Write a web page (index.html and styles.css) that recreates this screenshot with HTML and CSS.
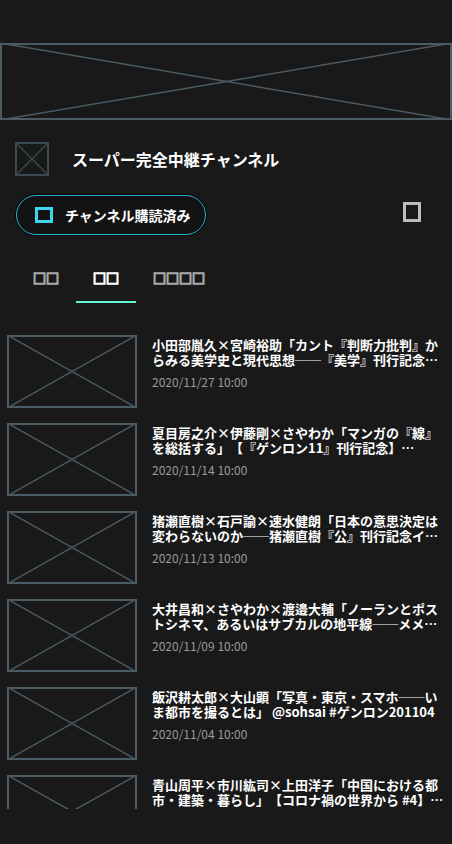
FILE: index.html
```html
<!DOCTYPE html>
<html lang="ja">
<head>
  <meta charset="UTF-8">
  <title>スーパー完全中継チャンネル</title>
  <link rel="stylesheet" href="styles.css">
</head>
<body>
  <div class="page">
    <div class="top-space"></div>

    <div class="banner">
      <svg width="452" height="77" viewBox="0 0 452 77" preserveAspectRatio="none">
        <rect x="1" y="1" width="450" height="75" fill="none" stroke="#4b5b64" stroke-width="2"/>
        <line x1="0" y1="0" x2="452" y2="77" stroke="#4b5b64" stroke-width="1.5"/>
        <line x1="452" y1="0" x2="0" y2="77" stroke="#4b5b64" stroke-width="1.5"/>
      </svg>
    </div>

    <div class="channel">
      <svg class="avatar" width="34" height="34" viewBox="0 0 34 34">
        <rect x="1" y="1" width="32" height="32" fill="none" stroke="#3a4850" stroke-width="2"/>
        <line x1="1" y1="1" x2="33" y2="33" stroke="#3a4850" stroke-width="1.4"/>
        <line x1="33" y1="1" x2="1" y2="33" stroke="#3a4850" stroke-width="1.4"/>
      </svg>
      <h1 class="channel-name">スーパー完全中継チャンネル</h1>
    </div>

    <div class="actions">
      <button class="subscribed">
        <svg width="18" height="16" viewBox="0 0 18 16">
          <rect x="1.5" y="1.5" width="15" height="13" fill="none" stroke="#3fd6f0" stroke-width="3"/>
        </svg>
        <span>チャンネル購読済み</span>
      </button>
      <button class="more">
        <svg width="18" height="20" viewBox="0 0 18 20">
          <rect x="1.5" y="1.5" width="15" height="17" fill="none" stroke="#bdbdbd" stroke-width="3"/>
        </svg>
      </button>
    </div>

    <div class="tabs">
      <div class="tab">□□</div>
      <div class="tab active">□□</div>
      <div class="tab">□□□□</div>
    </div>

    <ul class="video-list" id="video-list"></ul>
    <div class="footer"></div>
  </div>

  <script>
    const videos = [
      { title: '小田部胤久×宮崎裕助「カント『判断力批判』からみる美学史と現代思想──『美学』刊行記念イベント」', date: '2020/11/27 10:00' },
      { title: '夏目房之介×伊藤剛×さやわか「マンガの『線』を総括する」【『ゲンロン11』刊行記念】 @fusanosuke_n #ゲンロン201114', date: '2020/11/14 10:00' },
      { title: '猪瀬直樹×石戸諭×速水健朗「日本の意思決定は変わらないのか──猪瀬直樹『公』刊行記念イベント」', date: '2020/11/13 10:00' },
      { title: '大井昌和×さやわか×渡邉大輔「ノーランとポストシネマ、あるいはサブカルの地平線──メメント、テネット」', date: '2020/11/09 10:00' },
      { title: '飯沢耕太郎×大山顕「写真・東京・スマホ──いま都市を撮るとは」 @sohsai #ゲンロン201104', date: '2020/11/04 10:00' },
      { title: '青山周平×市川紘司×上田洋子「中国における都市・建築・暮らし」【コロナ禍の世界から #4】 #ゲンロン201030', date: '2020/10/30 10:00' }
    ];

    const thumb = `<svg width="130" height="73" viewBox="0 0 130 73">
        <rect x="1" y="1" width="128" height="71" fill="none" stroke="#4b5b64" stroke-width="2"/>
        <line x1="0" y1="0" x2="130" y2="73" stroke="#4b5b64" stroke-width="1.5"/>
        <line x1="130" y1="0" x2="0" y2="73" stroke="#4b5b64" stroke-width="1.5"/>
      </svg>`;

    const list = document.getElementById('video-list');
    videos.forEach(video => {
      const li = document.createElement('li');
      li.className = 'video';
      li.innerHTML = `<div class="thumb">${thumb}</div>
        <div class="info">
          <p class="video-title"></p>
          <p class="video-date"></p>
        </div>`;
      li.querySelector('.video-title').textContent = video.title;
      li.querySelector('.video-date').textContent = video.date;
      list.appendChild(li);
    });
  </script>
</body>
</html>
```

FILE: styles.css
```css
body {
  margin: 0;
  background-color: #191919;
  color: #fff;
  font-family: "Noto Sans CJK JP", "Noto Sans", sans-serif;
  text-spacing-trim: space-all;
}

.page {
  height: 844px;
  display: flex;
  flex-direction: column;
  overflow: hidden;
}

.top-space {
  height: 43px;
  flex-shrink: 0;
}

.banner {
  height: 77px;
  flex-shrink: 0;
}

.banner svg {
  display: block;
}

.channel {
  display: flex;
  align-items: center;
  gap: 23px;
  padding: 22px 15px 0;
}

.avatar {
  display: block;
  flex-shrink: 0;
}

.channel-name {
  margin: 0;
  font-size: 16px;
  font-weight: bold;
  line-height: 34px;
}

.actions {
  display: flex;
  justify-content: space-between;
  align-items: flex-start;
  padding: 19px 20px 0 16px;
}

button {
  font-family: inherit;
  color: #fff;
  border: none;
  background: none;
  cursor: pointer;
}

.subscribed {
  display: flex;
  align-items: center;
  gap: 12px;
  width: 190px;
  height: 40px;
  padding: 0 0 0 18px;
  border: 1px solid #27b4cf;
  border-radius: 20px;
  background-color: #131313;
  box-shadow: 0 0 0 1px #050505;
  font-size: 14px;
  font-weight: bold;
}

.subscribed svg {
  display: block;
}

.more {
  width: 40px;
  height: 34px;
  padding: 0;
  display: flex;
  align-items: center;
  justify-content: center;
}

.more svg {
  display: block;
}

.tabs {
  display: flex;
  padding: 20px 16px 0;
}

.tab {
  height: 46px;
  padding: 0 17px;
  font-size: 13px;
  line-height: 46px;
  color: #a9a9a9;
  -webkit-text-stroke: 1.5px currentColor;
  border-bottom: 2px solid transparent;
}

.tab.active {
  color: #fff;
  border-bottom-color: #5ff5d6;
}

.video-list {
  list-style: none;
  margin: 0;
  padding: 32px 0 0;
  height: 474px;
  overflow: hidden;
  flex-shrink: 0;
}

.video {
  display: flex;
  gap: 15px;
  padding: 0 7px;
  margin-bottom: 15px;
}

.thumb {
  width: 130px;
  height: 73px;
  flex-shrink: 0;
}

.thumb svg {
  display: block;
}

.info {
  flex: 1;
  min-width: 0;
  padding-top: 2px;
}

.video-title {
  margin: 0;
  font-size: 13px;
  font-weight: bold;
  line-height: 15px;
  display: -webkit-box;
  -webkit-box-orient: vertical;
  -webkit-line-clamp: 2;
  overflow: hidden;
}

.video-date {
  margin: 7px 0 0;
  font-size: 12px;
  line-height: 16px;
  color: #9a9a9a;
}

.footer {
  flex: 1;
}
```
